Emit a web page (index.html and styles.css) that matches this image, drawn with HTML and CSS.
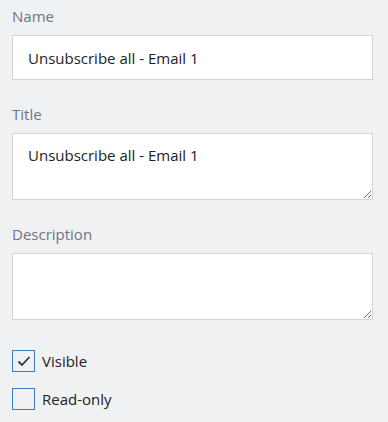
FILE: index.html
```html
<!DOCTYPE html>
<html lang="en">
<head>
  <meta charset="UTF-8" />
  <title>Properties</title>
  <link rel="stylesheet" href="styles.css">
</head>
<body>
  <div class="panel">
    <div class="field">
      <label class="label">Name</label>
      <input type="text" class="text-input" value="Unsubscribe all - Email 1" />
    </div>
    <div class="field">
      <label class="label">Title</label>
      <textarea class="text-area">Unsubscribe all - Email 1</textarea>
    </div>
    <div class="field last">
      <label class="label">Description</label>
      <textarea class="text-area"></textarea>
    </div>
    <div class="check-row">
      <span class="box checked">
        <svg width="14" height="12" viewBox="0 0 14 12"><path d="M1.5 6.5 L5 10 L12.5 2" fill="none" stroke="#2b3547" stroke-width="1.8"/></svg>
      </span>
      <span class="check-label">Visible</span>
    </div>
    <div class="check-row">
      <span class="box"></span>
      <span class="check-label">Read-only</span>
    </div>
  </div>
</body>
</html>
```

FILE: styles.css
```css
/* Base styles */
body {
  margin: 0;
  background-color: #f0f1f3;
  font-family: 'Open Sans', sans-serif;
  font-size: 15px;
  color: #222;
}
.panel {
  padding: 6px 15px 0 12px;
  display: flex;
  flex-direction: column;
}
.field {
  display: flex;
  flex-direction: column;
  margin-bottom: 24px;
}
.field.last {
  margin-bottom: 30px;
}
.label {
  color: #6b7785;
  font-size: 15px;
  line-height: 21px;
  margin-bottom: 8px;
}
.text-input,
.text-area {
  box-sizing: border-box;
  width: 361px;
  margin: 0;
  border: 1px solid #d3d5d8;
  background: white;
  font-family: 'Open Sans', sans-serif;
  font-size: 15px;
  color: #222;
  padding: 0 15px;
  outline: none;
}
.text-input {
  height: 45px;
}
.text-area {
  height: 67px;
  padding-top: 10px;
  line-height: 22px;
  resize: vertical;
}

/* Checkboxes */
.check-row {
  display: flex;
  align-items: center;
  height: 22px;
  margin-bottom: 16px;
}
.box {
  box-sizing: border-box;
  width: 23px;
  height: 22px;
  border: 1px solid #3d7ec2;
  background: transparent;
  display: flex;
  align-items: center;
  justify-content: center;
}
.check-label {
  margin-left: 7px;
  color: #222;
}
```
